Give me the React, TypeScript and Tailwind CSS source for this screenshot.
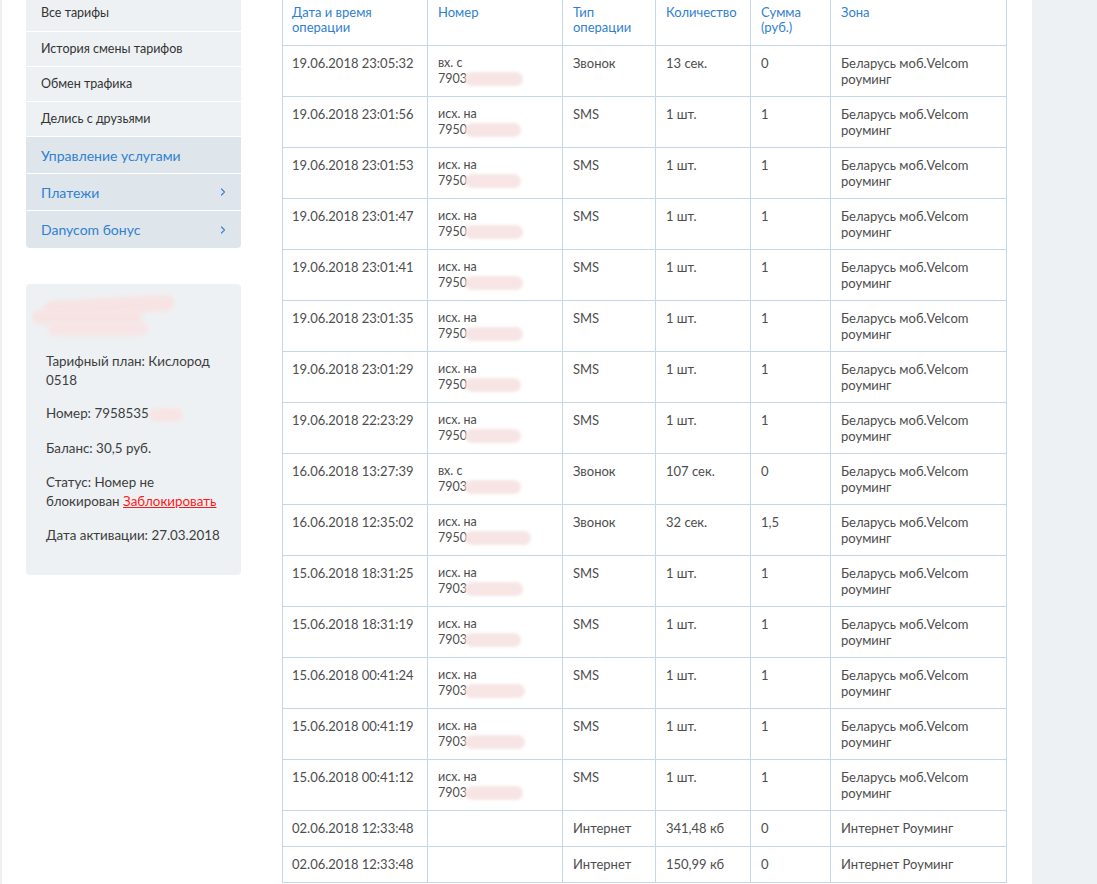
import { ChevronRight } from 'lucide-react';

type Row = {
  date: string;
  dir?: string;
  num?: string;
  type: string;
  qty: string;
  sum: string;
  zone: string;
  blob?: number;
};

const rows: Row[] = [
  { date: '19.06.2018 23:05:32', dir: 'вх. с', num: '7903', type: 'Звонок', qty: '13 сек.', sum: '0', zone: 'Беларусь моб.Velcom роуминг', blob: 58 },
  { date: '19.06.2018 23:01:56', dir: 'исх. на', num: '7950', type: 'SMS', qty: '1 шт.', sum: '1', zone: 'Беларусь моб.Velcom роуминг', blob: 56 },
  { date: '19.06.2018 23:01:53', dir: 'исх. на', num: '7950', type: 'SMS', qty: '1 шт.', sum: '1', zone: 'Беларусь моб.Velcom роуминг', blob: 56 },
  { date: '19.06.2018 23:01:47', dir: 'исх. на', num: '7950', type: 'SMS', qty: '1 шт.', sum: '1', zone: 'Беларусь моб.Velcom роуминг', blob: 58 },
  { date: '19.06.2018 23:01:41', dir: 'исх. на', num: '7950', type: 'SMS', qty: '1 шт.', sum: '1', zone: 'Беларусь моб.Velcom роуминг', blob: 58 },
  { date: '19.06.2018 23:01:35', dir: 'исх. на', num: '7950', type: 'SMS', qty: '1 шт.', sum: '1', zone: 'Беларусь моб.Velcom роуминг', blob: 58 },
  { date: '19.06.2018 23:01:29', dir: 'исх. на', num: '7950', type: 'SMS', qty: '1 шт.', sum: '1', zone: 'Беларусь моб.Velcom роуминг', blob: 56 },
  { date: '19.06.2018 22:23:29', dir: 'исх. на', num: '7950', type: 'SMS', qty: '1 шт.', sum: '1', zone: 'Беларусь моб.Velcom роуминг', blob: 56 },
  { date: '16.06.2018 13:27:39', dir: 'вх. с', num: '7903', type: 'Звонок', qty: '107 сек.', sum: '0', zone: 'Беларусь моб.Velcom роуминг', blob: 56 },
  { date: '16.06.2018 12:35:02', dir: 'исх. на', num: '7950', type: 'Звонок', qty: '32 сек.', sum: '1,5', zone: 'Беларусь моб.Velcom роуминг', blob: 66 },
  { date: '15.06.2018 18:31:25', dir: 'исх. на', num: '7903', type: 'SMS', qty: '1 шт.', sum: '1', zone: 'Беларусь моб.Velcom роуминг', blob: 58 },
  { date: '15.06.2018 18:31:19', dir: 'исх. на', num: '7903', type: 'SMS', qty: '1 шт.', sum: '1', zone: 'Беларусь моб.Velcom роуминг', blob: 56 },
  { date: '15.06.2018 00:41:24', dir: 'исх. на', num: '7903', type: 'SMS', qty: '1 шт.', sum: '1', zone: 'Беларусь моб.Velcom роуминг', blob: 60 },
  { date: '15.06.2018 00:41:19', dir: 'исх. на', num: '7903', type: 'SMS', qty: '1 шт.', sum: '1', zone: 'Беларусь моб.Velcom роуминг', blob: 60 },
  { date: '15.06.2018 00:41:12', dir: 'исх. на', num: '7903', type: 'SMS', qty: '1 шт.', sum: '1', zone: 'Беларусь моб.Velcom роуминг', blob: 58 },
  { date: '02.06.2018 12:33:48', type: 'Интернет', qty: '341,48 кб', sum: '0', zone: 'Интернет Роуминг' },
  { date: '02.06.2018 12:33:48', type: 'Интернет', qty: '150,99 кб', sum: '0', zone: 'Интернет Роуминг' },
];

const menuTop = ['Все тарифы', 'История смены тарифов', 'Обмен трафика', 'Делись с друзьями'];

// pink smudge left where the number was scrubbed out
function Blob({ w }: { w: number }) {
  return (
    <span
      className="inline-block align-middle h-[14px] rounded-full bg-[#f7e5e5] blur-[1.5px] -ml-[2px]"
      style={{ width: w }}
    />
  );
}

export default function App() {
  return (
    <div className="flex h-[884px] w-[1097px] overflow-hidden bg-white font-['Lato','Noto_Sans',sans-serif] text-[13px] text-[#4d4d4d]">
      <div className="w-[2px] shrink-0 bg-[#eef1f3]" />

      {/* sidebar */}
      <div className="ml-[24px] w-[215px] shrink-0">
        <div className="overflow-hidden rounded-b-[4px]">
          {menuTop.map((t, i) => (
            <div
              key={t}
              className={`flex items-center bg-[#eef1f3] px-[15px] text-[12.5px] text-[#333] border-b border-white ${i === 0 ? 'h-[32px] pb-[4px]' : 'h-[35px]'}`}
            >
              {t}
            </div>
          ))}
          <div className="flex h-[37px] items-center bg-[#dee6ec] px-[15px] text-[14px] text-[#2f80d1] border-b border-white">
            Управление услугами
          </div>
          <div className="flex h-[37px] items-center justify-between bg-[#dee6ec] px-[15px] text-[14px] text-[#2f80d1] border-b border-white">
            Платежи
            <ChevronRight size={12} strokeWidth={2.5} className="-mr-[3px] text-[#3b88d6]" />
          </div>
          <div className="flex h-[37px] items-center justify-between bg-[#dee6ec] px-[15px] text-[14px] text-[#2f80d1]">
            Danycom бонус
            <ChevronRight size={12} strokeWidth={2.5} className="-mr-[3px] text-[#3b88d6]" />
          </div>
        </div>

        <div className="mt-[36px] h-[291px] rounded-[4px] bg-[#eef1f3] px-[20px] pt-[8px] leading-[19px] text-[13.4px] text-[#3d3d3d]">
          <div className="relative h-[50px] -ml-[18px]">
            <span className="absolute left-[16px] top-[6px] h-[16px] w-[130px] -rotate-3 rounded-full bg-[#f7e3e3] blur-[2px]" />
            <span className="absolute left-[4px] top-[18px] h-[14px] w-[110px] rounded-full bg-[#f7e3e3] blur-[2px]" />
            <span className="absolute left-[20px] top-[30px] h-[14px] w-[100px] rounded-full bg-[#f7e5e5] blur-[2px]" />
          </div>
          <p className="mt-[10px]">Тарифный план: Кислород 0518</p>
          <p className="mt-[14px]">
            Номер: 7958535
            <span className="inline-block align-middle h-[14px] w-[34px] rounded-full bg-[#f7e5e5] blur-[1.5px]" />
          </p>
          <p className="mt-[16px]">Баланс: 30,5 руб.</p>
          <p className="mt-[15px]">
            Статус: Номер не блокирован{' '}
            <a className="text-[#ff1a1a] underline">Заблокировать</a>
          </p>
          <p className="mt-[15px]">Дата активации: 27.03.2018</p>
        </div>
      </div>

      {/* table */}
      <div className="ml-[41px] w-[724px] shrink-0">
        <table className="w-[724px] table-fixed border-collapse">
          <colgroup>
            <col className="w-[145px]" />
            <col className="w-[135px]" />
            <col className="w-[93px]" />
            <col className="w-[95px]" />
            <col className="w-[80px]" />
            <col className="w-[176px]" />
          </colgroup>
          <thead>
            <tr className="h-[45px] text-left align-top text-[13px] leading-[15px] text-[#2f80d1]">
              <th className="border-x border-b border-[#c4d6e8] pl-[9px] pr-[10px] pt-[5px] font-normal">Дата и время операции</th>
              <th className="border-x border-b border-[#c4d6e8] px-[10px] pt-[5px] font-normal">Номер</th>
              <th className="border-x border-b border-[#c4d6e8] px-[10px] pt-[5px] font-normal">Тип операции</th>
              <th className="border-x border-b border-[#c4d6e8] px-[10px] pt-[5px] font-normal">Количество</th>
              <th className="border-x border-b border-[#c4d6e8] px-[10px] pt-[5px] font-normal">Сумма (руб.)</th>
              <th className="border-x border-b border-[#c4d6e8] px-[10px] pt-[5px] font-normal">Зона</th>
            </tr>
          </thead>
          <tbody>
            {rows.map((r, i) => (
              <tr key={i} className={`align-top leading-[16px] ${r.dir ? 'h-[51px]' : 'h-[36px]'}`}>
                <td className="border border-[#c4d6e8] pl-[9px] pr-[6px] pt-[9px] whitespace-nowrap">{r.date}</td>
                <td className="border border-[#c4d6e8] px-[10px] pt-[9px] text-[12.5px]">
                  {r.dir && (
                    <>
                      <div>{r.dir}</div>
                      <div className="whitespace-nowrap">
                        {r.num}
                        <Blob w={r.blob ?? 56} />
                      </div>
                    </>
                  )}
                </td>
                <td className="border border-[#c4d6e8] px-[10px] pt-[9px]">{r.type}</td>
                <td className="border border-[#c4d6e8] px-[10px] pt-[9px]">{r.qty}</td>
                <td className="border border-[#c4d6e8] px-[10px] pt-[9px]">{r.sum}</td>
                <td className="border border-[#c4d6e8] px-[10px] pt-[9px]">{r.zone}</td>
              </tr>
            ))}
          </tbody>
        </table>
      </div>

      <div className="ml-[26px] flex-1 bg-[#eef1f3]" />
    </div>
  );
}
